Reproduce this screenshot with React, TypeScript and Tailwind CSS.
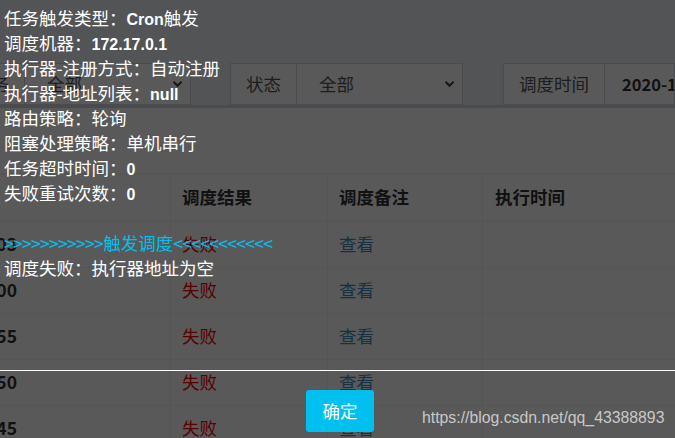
import React from "react";

const times = [
  "2020-12-09 16:42:03",
  "2020-12-09 16:42:00",
  "2020-12-09 16:41:55",
  "2020-12-09 16:41:50",
  "2020-12-09 16:41:45",
];

function Chevron() {
  return (
    <svg width="11" height="8" viewBox="0 0 11 8" className="text-[#444]">
      <path d="M1.5 1.8 L5.5 5.8 L9.5 1.8" fill="none" stroke="currentColor" strokeWidth="2" />
    </svg>
  );
}

function Toolbar() {
  return (
    <div className="flex h-[42px] items-stretch text-[17.5px] text-[#555]">
      <div className="-ml-[42px] flex w-[233px] shrink-0">
        <div className="flex w-[67px] items-center justify-center border border-[#d2d6de] bg-white">任务</div>
        <div className="flex flex-1 items-center justify-between border border-l-0 border-[#d2d6de] bg-white pl-[22px] pr-[7px]">
          <span>全部</span>
          <Chevron />
        </div>
      </div>
      <div className="ml-[39px] flex w-[233px] shrink-0">
        <div className="flex w-[67px] items-center justify-center border border-[#d2d6de] bg-white">状态</div>
        <div className="flex flex-1 items-center justify-between border border-l-0 border-[#d2d6de] bg-white pl-[22px] pr-[7px]">
          <span>全部</span>
          <Chevron />
        </div>
      </div>
      <div className="ml-[40px] flex flex-1 overflow-hidden">
        <div className="flex w-[102px] shrink-0 items-center justify-center border border-[#d2d6de] bg-white">调度时间</div>
        <div className="flex flex-1 items-center overflow-hidden whitespace-nowrap border border-l-0 border-[#d2d6de] bg-white pl-[17px] text-[16.5px] font-semibold text-[#333]">
          2020-12-09 00:00:00 - 2020-12-09 23:59:59
        </div>
      </div>
    </div>
  );
}

function LogTable() {
  return (
    <div className="text-[17.5px] text-[#333]">
      <div className="grid h-[49px] grid-cols-[170px_157px_155px_1fr] border-y-2 border-[#f4f4f4] font-bold">
        <div className="overflow-hidden" />
        <div className="flex items-center border-l border-[#f4f4f4] pl-[11px]">调度结果</div>
        <div className="flex items-center border-l border-[#f4f4f4] pl-[11px]">调度备注</div>
        <div className="flex items-center border-l border-[#f4f4f4] pl-[12px]">执行时间</div>
      </div>
      {times.map((t) => (
        <div key={t} className="grid h-[46px] grid-cols-[170px_157px_155px_1fr] border-b border-[#f4f4f4]">
          <div className="flex items-center justify-end overflow-hidden whitespace-nowrap pr-[153px] font-semibold">{t}</div>
          <div className="flex items-center border-l border-[#f4f4f4] pl-[11px] text-[red]">失败</div>
          <div className="flex items-center border-l border-[#f4f4f4] pl-[11px] text-[#3c8dbc]">查看</div>
          <div className="border-l border-[#f4f4f4]" />
        </div>
      ))}
    </div>
  );
}

function B({ children }: { children: React.ReactNode }) {
  return <span className="font-['Liberation_Sans',Arial,sans-serif] text-[16px] font-bold leading-none">{children}</span>;
}

function Line({ children, className = "" }: { children?: React.ReactNode; className?: string }) {
  return <div className={`h-[25px] whitespace-nowrap leading-[25px] ${className}`}>{children}</div>;
}

export default function App() {
  return (
    <div className="relative h-[438px] w-[675px] overflow-hidden bg-[#ecf0f5] font-['Noto_Sans_CJK_SC',sans-serif]">
      <div className="pt-[63px]">
        <Toolbar />
        <div className="border-t-[3px] border-[#d2d6de] bg-white pt-[65px]">
          <LogTable />
        </div>
      </div>

      <div className="absolute inset-0 bg-black/65" />

      <div className="absolute inset-0 flex flex-col text-white">
        <div className="h-[370px] pl-[4px] pt-[5px] text-[17.5px]">
          <Line>任务触发类型：<B>Cron</B>触发</Line>
          <Line>调度机器：<B>172.17.0.1</B></Line>
          <Line>执行器-注册方式：自动注册</Line>
          <Line>执行器-地址列表：<B>null</B></Line>
          <Line>路由策略：轮询</Line>
          <Line>阻塞处理策略：单机串行</Line>
          <Line>任务超时时间：<B>0</B></Line>
          <Line>失败重试次数：<B>0</B></Line>
          <Line />
          <Line className="text-[#00c0ef]">
            <span className="tracking-[-0.7px]">&gt;&gt;&gt;&gt;&gt;&gt;&gt;&gt;&gt;&gt;&gt;</span>
            触发调度
            <span className="tracking-[-0.7px]">&lt;&lt;&lt;&lt;&lt;&lt;&lt;&lt;&lt;&lt;&lt;</span>
          </Line>
          <Line>调度失败：执行器地址为空</Line>
        </div>
        <div className="flex flex-1 justify-center border-t border-white pl-[5px] pt-[19px]">
          <button className="h-[42px] w-[68px] rounded-[3px] bg-[#00c0ef] text-[17.5px] text-white">确定</button>
        </div>
      </div>

      <div className="absolute left-[422px] top-[407px] font-['Liberation_Sans',Arial,sans-serif] text-[15.8px] leading-[22px] text-[#c8c8c8]">
        https://blog.csdn.net/qq_43388893
      </div>
    </div>
  );
}
